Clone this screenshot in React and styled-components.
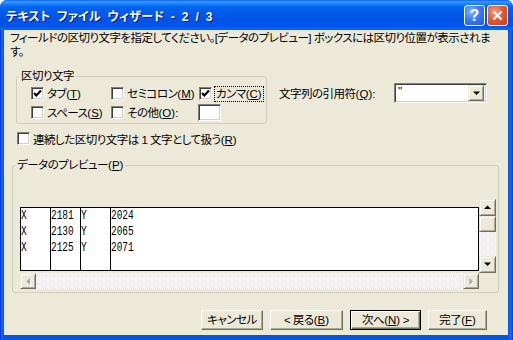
import React from 'react';
import styled, { createGlobalStyle } from 'styled-components';

const GlobalStyle = createGlobalStyle`
  html, body { margin: 0; padding: 0; background: #fff; }
  body {
    font-family: "Liberation Sans", "Noto Sans CJK JP", sans-serif;
    font-size: 11.5px;
    letter-spacing: -0.5px;
    font-feature-settings: "palt" 1;
    color: #000;
  }
  * { box-sizing: border-box; }
`;

const Window = styled.div`
  width: 513px;
  height: 340px;
  display: flex;
  flex-direction: column;
  background: #0855dd;
  border-radius: 7px 7px 0 0;
  overflow: hidden;
`;

const TitleBar = styled.div`
  height: 30px;
  flex: none;
  display: flex;
  align-items: center;
  padding: 1px 5px 0 6px;
  background: linear-gradient(
    to bottom,
    #0058ee 0%,
    #3593ff 4%,
    #288eff 10%,
    #127dff 14%,
    #036ffc 20%,
    #0262ee 24%,
    #0057e5 56%,
    #0054e3 66%,
    #0055eb 86%,
    #005bf5 92%,
    #026afe 94%,
    #0062ef 100%
  );
`;

const TitleText = styled.div`
  flex: 1;
  color: #fff;
  font-weight: bold;
  font-size: 12px;
  letter-spacing: 0.3px;
  white-space: nowrap;
  word-spacing: 3px;
  text-shadow: 1px 1px #0a1883;
`;

const TitleButtons = styled.div`
  display: flex;
  gap: 2px;
`;

const CaptionBtn = styled.div`
  width: 21px;
  height: 21px;
  border: 1px solid #fff;
  border-radius: 3px;
  display: flex;
  align-items: center;
  justify-content: center;
  color: #fff;
  font-weight: bold;
  font-size: 16px;
  letter-spacing: 0;
  background: ${p =>
    p.$close
      ? 'radial-gradient(circle at 35% 30%, #f0a088 0%, #e35a33 45%, #c83c14 100%)'
      : 'radial-gradient(circle at 35% 30%, #8ab4ff 0%, #3c7cf4 45%, #1d58dc 100%)'};
`;

const Frame = styled.div`
  flex: 1;
  min-height: 0;
  display: flex;
  padding: 0 5px 5px 4px;
  background: linear-gradient(
    to right,
    #0831d9 0,
    #166aee 2px,
    #0855dd 4px,
    #0855dd calc(100% - 5px),
    #166aee calc(100% - 2px),
    #0831d9 100%
  );
`;

const Body = styled.div`
  flex: 1;
  min-width: 0;
  overflow: hidden;
  background: #ece9d8;
  display: flex;
  flex-direction: column;
`;

const Intro = styled.div`
  margin: 1px 0 0 6px;
  line-height: 14px;
  white-space: nowrap;
  letter-spacing: -0.52px;
`;

const KeyWrap = styled.span`
  font-family: "Liberation Sans", Arial, sans-serif;
  letter-spacing: 0;
`;

const U = styled.span`
  text-decoration: underline;
  text-underline-offset: 1px;
`;

const Key = ({ k, colon }) => (
  <KeyWrap>
    (<U>{k}</U>){colon ? ':' : ''}
  </KeyWrap>
);

const TopRow = styled.div`
  display: flex;
  align-items: flex-start;
  margin-top: 10px;
`;

const Group = styled.fieldset`
  margin: ${p => p.$mt || 0}px 0 0 ${p => p.$ml}px;
  width: ${p => p.$w}px;
  min-width: 0;
  border: 1px solid #d0d0bf;
  border-radius: 3px;
  padding: ${p => p.$pad};
`;

const Legend = styled.legend`
  margin-left: ${p => p.$ml}px;
  padding: 0 2px;
  line-height: 14px;
`;

const OptGrid = styled.div`
  display: grid;
  grid-template-columns: 80px 88px auto;
  grid-auto-rows: 19px;
  align-items: center;
`;

const Option = styled.label`
  display: flex;
  align-items: center;
  gap: 3px;
  white-space: nowrap;
  line-height: 14px;
`;

const Box = styled.span`
  width: 13px;
  height: 13px;
  flex: none;
  background: #fff;
  border: 1px solid;
  border-color: #808080 #fff #fff #808080;
  box-shadow: inset 1px 1px #404040, inset -1px -1px #d4d0c8;
  display: flex;
  align-items: center;
  justify-content: center;
`;

const Focus = styled.span`
  outline: 1px dotted #000;
  outline-offset: 0;
  padding: 0 1px;
`;

const SmallInput = styled.div`
  width: 23px;
  height: 17px;
  margin-left: -1px;
  background: #fff;
  border: 1px solid;
  border-color: #808080 #fff #fff #808080;
  box-shadow: inset 1px 1px #404040, inset -1px -1px #d4d0c8;
`;

const QuoteField = styled.div`
  display: flex;
  align-items: center;
  justify-content: space-between;
  width: 208px;
  margin: 14px 0 0 12px;
  white-space: nowrap;
`;

const Combo = styled.div`
  width: 93px;
  height: 20px;
  background: #fff;
  border: 1px solid;
  border-color: #808080 #fff #fff #808080;
  box-shadow: inset 1px 1px #404040, inset -1px -1px #d4d0c8;
  display: flex;
  align-items: center;
  justify-content: space-between;
  padding: 2px 2px 2px 3px;
  line-height: 14px;
`;

const ComboValue = styled.span`
  align-self: flex-start;
  margin-top: -2px;
`;

const ScrollBtn = styled.div`
  width: ${p => p.$w || 16}px;
  height: ${p => p.$h || 16}px;
  flex: none;
  background: #ece9d8;
  border: 1px solid;
  border-color: #ece9d8 #716f64 #716f64 #ece9d8;
  box-shadow: inset 1px 1px #fff, inset -1px -1px #aca899;
  display: flex;
  align-items: center;
  justify-content: center;
`;

const ConsecRow = styled.label`
  display: flex;
  align-items: center;
  gap: 3px;
  height: 19px;
  margin: 5px 0 0 13px;
  white-space: nowrap;
`;

const PreviewGrid = styled.div`
  display: grid;
  grid-template-columns: 459px 17px;
  grid-template-rows: 8px 64px 2px 16px;
`;

const DataBox = styled.div`
  grid-column: 1;
  grid-row: 2;
  background: #fff;
  border: 1px solid #000;
  display: flex;
`;

const DataCol = styled.div`
  width: ${p => (p.$last ? 'auto' : '30px')};
  flex: ${p => (p.$last ? '1' : 'none')};
  border-right: ${p => (p.$last ? 'none' : '1px solid #000')};
`;

const Cell = styled.div`
  height: 16px;
  line-height: 16px;
  font-family: "Liberation Mono", "Courier New", monospace;
  font-size: 13.5px;
  letter-spacing: 0;
  white-space: nowrap;
  transform: scaleX(0.7);
  transform-origin: left center;
`;

const VScroll = styled.div`
  grid-column: 2;
  grid-row: 1 / 4;
  display: flex;
  flex-direction: column;
`;

const HScroll = styled.div`
  grid-column: 1;
  grid-row: 4;
  display: flex;
`;

const Track = styled.div`
  flex: 1;
  background-color: #ece9d8;
  background-image: conic-gradient(#fff 25%, #ece9d8 0 50%, #fff 0 75%, #ece9d8 0);
  background-size: 2px 2px;
`;

const ButtonRow = styled.div`
  display: flex;
  justify-content: flex-end;
  gap: 7px;
  margin-top: 17px;
  padding-right: 21px;
`;

const Button = styled.div`
  width: ${p => p.$w}px;
  height: 20px;
  display: flex;
  align-items: center;
  justify-content: center;
  white-space: nowrap;
  background: #ece9d8;
  line-height: 14px;
  border: 1px solid;
  border-color: ${p => (p.$default ? '#000' : '#fff #716f64 #716f64 #fff')};
  box-shadow: ${p =>
    p.$default
      ? 'inset 1px 1px #fff, inset -1px -1px #716f64, inset -2px -2px #aca899'
      : 'inset -1px -1px #aca899'};
`;

const Arrow = ({ dir, disabled }) => {
  const pts = {
    up: '1,5 8,5 4.5,1.5',
    down: '1,1.5 8,1.5 4.5,5',
    left: '5,1 5,8 1.5,4.5',
    right: '1.5,1 1.5,8 5,4.5',
  }[dir];
  const vertical = dir === 'up' || dir === 'down';
  return (
    <svg width={vertical ? 9 : 7} height={vertical ? 7 : 9} viewBox={vertical ? '0 0 9 7' : '0 0 7 9'}>
      {disabled && <polygon points={pts} fill="#fff" transform="translate(1,1)" />}
      <polygon points={pts} fill={disabled ? '#aca899' : '#000'} />
    </svg>
  );
};

const Check = ({ checked }) => (
  <Box>
    {checked && (
      <svg width="9" height="9" viewBox="0 0 9 9">
        <polyline points="1,4 3.3,6.5 8,1.5" fill="none" stroke="#000" strokeWidth="2.2" />
      </svg>
    )}
  </Box>
);

const rows = [
  ['X', '2181', 'Y', '2024'],
  ['X', '2130', 'Y', '2065'],
  ['X', '2125', 'Y', '2071'],
];

export default function App() {
  return (
    <>
      <GlobalStyle />
      <Window>
        <TitleBar>
          <TitleText>テキスト ファイル ウィザード - 2 / 3</TitleText>
          <TitleButtons>
            <CaptionBtn>?</CaptionBtn>
            <CaptionBtn $close>
              <svg width="11" height="11" viewBox="0 0 11 11">
                <path d="M1.5 1.5 L9.5 9.5 M9.5 1.5 L1.5 9.5" stroke="#fff" strokeWidth="2.2" />
              </svg>
            </CaptionBtn>
          </TitleButtons>
        </TitleBar>
        <Frame>
          <Body>
            <Intro>
              フィールドの区切り文字を指定してください。[データのプレビュー] ボックスには区切り位置が表示されま
              <br />す。
            </Intro>
            <TopRow>
              <Group $ml={12} $w={251} $pad="1px 0 1px 14px">
                <Legend $ml={-12}>区切り文字</Legend>
                <OptGrid>
                  <Option>
                    <Check checked />
                    <span>タブ<Key k="T" /></span>
                  </Option>
                  <Option>
                    <Check />
                    <span>セミコロン<Key k="M" /></span>
                  </Option>
                  <Option>
                    <Check checked />
                    <Focus>
                      カンマ<Key k="C" />
                    </Focus>
                  </Option>
                  <Option>
                    <Check />
                    <span>スペース<Key k="S" /></span>
                  </Option>
                  <Option>
                    <Check />
                    <span>その他<Key k="O" colon /></span>
                  </Option>
                  <SmallInput />
                </OptGrid>
              </Group>
              <QuoteField>
                <span>
                  文字列の引用符<Key k="Q" colon />
                </span>
                <Combo>
                  <ComboValue>"</ComboValue>
                  <ScrollBtn $w={16} $h={16}>
                    <Arrow dir="down" />
                  </ScrollBtn>
                </Combo>
              </QuoteField>
            </TopRow>
            <ConsecRow>
              <Check />
              <span>
                連続した区切り文字は 1 文字として扱う<Key k="R" />
              </span>
            </ConsecRow>
            <Group $ml={8} $mt={10} $w={487} $pad="27px 2px 3px 7px">
              <Legend $ml={-5}>
                データのプレビュー<Key k="P" />
              </Legend>
              <PreviewGrid>
                <DataBox>
                  {[0, 1, 2, 3].map(c => (
                    <DataCol key={c} $last={c === 3}>
                      {rows.map((r, i) => (
                        <Cell key={i}>{r[c]}</Cell>
                      ))}
                    </DataCol>
                  ))}
                </DataBox>
                <VScroll>
                  <ScrollBtn $w={17} $h={17}>
                    <Arrow dir="up" />
                  </ScrollBtn>
                  <ScrollBtn $w={17} $h={16} />
                  <Track />
                  <ScrollBtn $w={17} $h={17}>
                    <Arrow dir="down" />
                  </ScrollBtn>
                </VScroll>
                <HScroll>
                  <ScrollBtn $w={16} $h={16}>
                    <Arrow dir="left" disabled />
                  </ScrollBtn>
                  <Track />
                  <ScrollBtn $w={16} $h={16}>
                    <Arrow dir="right" disabled />
                  </ScrollBtn>
                </HScroll>
              </PreviewGrid>
            </Group>
            <ButtonRow>
              <Button $w={62}>キャンセル</Button>
              <Button $w={73}>
                <span>&lt; 戻る<Key k="B" /></span>
              </Button>
              <Button $w={71} $default>
                <span>次へ<Key k="N" /> &gt;</span>
              </Button>
              <Button $w={59}>
                <span>完了<Key k="F" /></span>
              </Button>
            </ButtonRow>
          </Body>
        </Frame>
      </Window>
    </>
  );
}
